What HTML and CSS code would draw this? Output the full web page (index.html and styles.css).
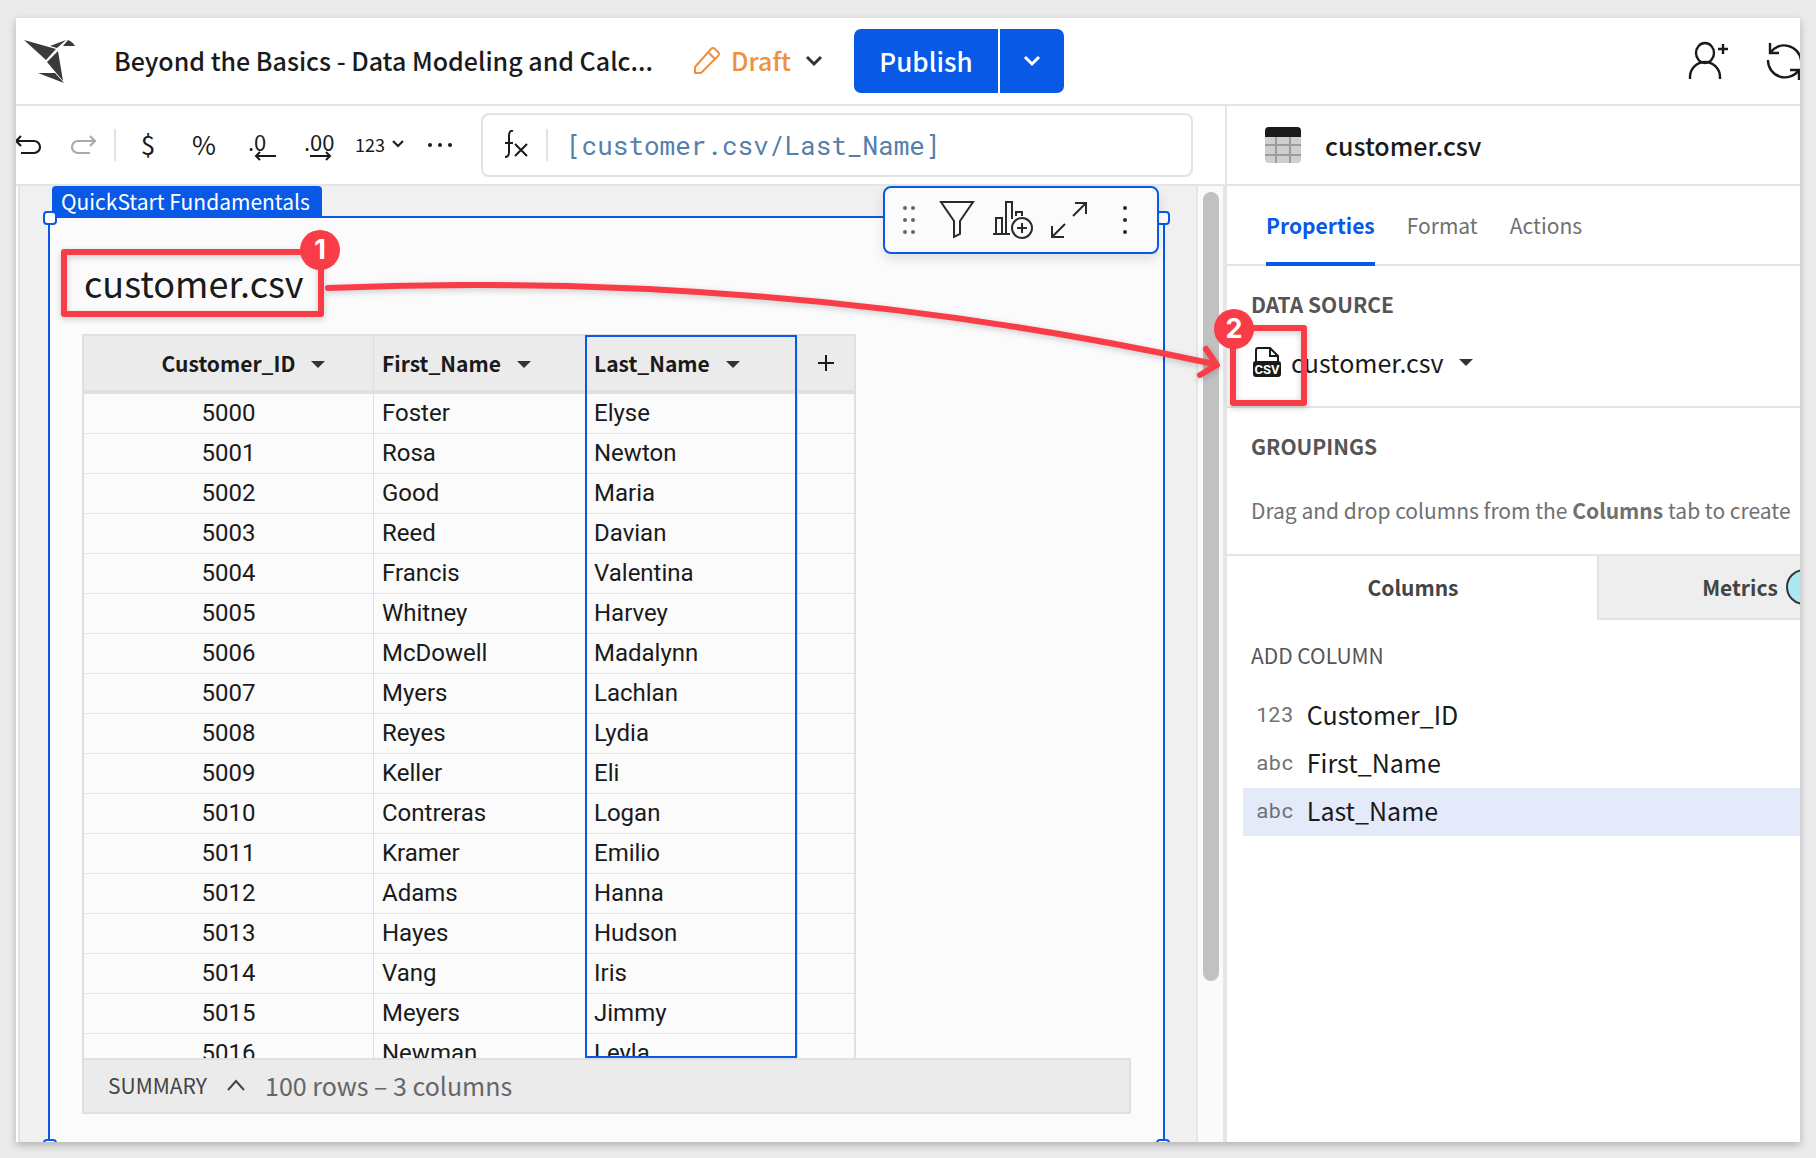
FILE: index.html
```html
<!DOCTYPE html>
<html lang="en">
<head>
<meta charset="utf-8">
<title>Beyond the Basics - Data Modeling and Calculations</title>
<link rel="stylesheet" href="styles.css">
</head>
<body>
<div class="app">
  <header class="topbar">
    <svg class="logo" width="52" height="46" viewBox="0 0 52 46" fill="#3a3a3a"><path d="M0 2 32 11 22 22z"/><path d="M26 8 42 2 33 10z"/><path d="M44 2q5 2 7 6H39z"/><path d="M34 13 23 24 39 43z"/><path d="M14 35H31L40 45z"/></svg>
    <h1 class="doc-title">Beyond the Basics - Data Modeling and Calc...</h1>
    <button class="draft" type="button">
      <svg width="28" height="30" viewBox="0 0 28 30" fill="none" stroke="#ef9040" stroke-width="2" stroke-linejoin="round"><path d="M2 21 18 3q2-2 4 0l3 3q2 2 0 4L8 27H2zM15 6l7 7"/></svg>
      <span>Draft</span>
      <svg width="18" height="12" viewBox="0 0 18 12" fill="none" stroke="#333" stroke-width="3"><path d="M2 2l7 7 7-7"/></svg>
    </button>
    <div class="publish">
      <button class="publish-main" type="button">Publish</button>
      <button class="publish-more" type="button" aria-label="Publish options"><svg width="18" height="12" viewBox="0 0 18 12" fill="none" stroke="#fff" stroke-width="3"><path d="M2 2l7 7 7-7"/></svg></button>
    </div>
    <div class="top-actions">
      <button type="button" aria-label="Share"><svg width="42" height="40" viewBox="0 0 42 40" fill="none" stroke="#1a1a1a" stroke-width="2.4"><ellipse cx="17" cy="12" rx="9" ry="10"/><path d="M2 38V36a15 15 0 0 1 30 0v2M35 3v10M30 8h10"/></svg></button>
      <button type="button" aria-label="Refresh"><svg width="40" height="38" viewBox="0 0 40 38" fill="none" stroke="#1a1a1a" stroke-width="2.4"><path d="M4 1v10h9M4 11A17 17 0 0 1 35 18M2 18A17 17 0 0 0 33 28M24 28h9v10"/></svg></button>
    </div>
  </header>

  <div class="workspace">
    <main class="main">
      <div class="toolbar">
        <button class="undo" type="button" aria-label="Undo"><svg width="26" height="20" viewBox="0 0 26 20" fill="none" stroke="#1a1a1a" stroke-width="2.2"><path d="M5 1 0 6l5 5M0 6h18a6 6 0 0 1 0 12H5"/></svg></button>
        <button class="redo" type="button" aria-label="Redo"><svg width="26" height="20" viewBox="0 0 26 20" fill="none" stroke="#aaa" stroke-width="2.2"><path d="M20 1l5 5-5 5M25 6H8a6 6 0 0 0 0 12h12"/></svg></button>
        <i class="rule"></i>
        <button class="tool currency" type="button">$</button>
        <button class="tool percent" type="button">%</button>
        <button class="tool decimals" type="button"><span>.0</span><svg width="22" height="10" viewBox="0 0 22 10" fill="none" stroke="#1a1a1a" stroke-width="2"><path d="M22 5H2M6 1 2 5l4 4"/></svg></button>
        <button class="tool decimals" type="button"><span>.00</span><svg width="22" height="10" viewBox="0 0 22 10" fill="none" stroke="#1a1a1a" stroke-width="2"><path d="M0 5h20M16 1l4 4-4 4"/></svg></button>
        <button class="tool number" type="button">123<svg width="14" height="9" viewBox="0 0 14 9" fill="none" stroke="#1a1a1a" stroke-width="2"><path d="M2 1l5 5 5-5"/></svg></button>
        <button class="tool" type="button" aria-label="More"><svg width="26" height="6" viewBox="0 0 26 6" fill="#1a1a1a"><circle cx="3" cy="3" r="2"/><circle cx="13" cy="3" r="2"/><circle cx="23" cy="3" r="2"/></svg></button>
        <label class="formula">
          <svg width="24" height="30" viewBox="0 0 24 30" fill="none" stroke="#1a1a1a" stroke-width="2"><path d="M9 1Q5 0 5 6v16q0 5-4 5M1 13h8M11 14l12 12M23 14 11 26"/></svg>
          <i class="rule"></i>
          <input type="text" value="[customer.csv/Last_Name]" aria-label="Formula">
        </label>
      </div>

      <div class="canvas">
        <section class="page">
          <span class="page-tag">QuickStart Fundamentals</span>
          <i class="handle tl"></i><i class="handle tr"></i><i class="handle bl"></i><i class="handle br"></i>
          <div class="element-tools">
            <svg class="grip" width="14" height="30" viewBox="0 0 14 30" fill="#666"><circle cx="3" cy="3" r="2"/><circle cx="11" cy="3" r="2"/><circle cx="3" cy="15" r="2"/><circle cx="11" cy="15" r="2"/><circle cx="3" cy="27" r="2"/><circle cx="11" cy="27" r="2"/></svg>
            <button type="button" aria-label="Filter"><svg width="36" height="38" viewBox="0 0 36 38" fill="none" stroke="#2a2a2a" stroke-width="2"><path d="M2 1h32L21 20v13l-6 3V20z"/></svg></button>
            <button type="button" aria-label="Create child element"><svg width="40" height="38" viewBox="0 0 40 38" fill="none" stroke="#2a2a2a" stroke-width="2"><path d="M0 33h17M3 33V17h6v16M13 33V1h6v17M23 15v-4h6v4"/><circle cx="29" cy="27" r="10"/><path d="M24 27h10M29 22v10"/></svg></button>
            <button type="button" aria-label="Maximize"><svg width="38" height="38" viewBox="0 0 38 38" fill="none" stroke="#2a2a2a" stroke-width="2"><path d="M24 2h11v11M35 2 22 15M1 25v11h12M1 36l13-13"/></svg></button>
            <button class="more" type="button" aria-label="More actions"><svg width="6" height="30" viewBox="0 0 6 30" fill="#2a2a2a"><circle cx="3" cy="3" r="2"/><circle cx="3" cy="15" r="2"/><circle cx="3" cy="27" r="2"/></svg></button>
          </div>
          <h2 class="element-title">customer.csv</h2>
          <div class="table-wrap">
            <table class="grid">
              <colgroup><col class="c-id"><col class="c-name"><col class="c-name"><col class="c-add"></colgroup>
              <thead><tr>
                <th class="center">Customer_ID<i class="caret"></i></th>
                <th>First_Name<i class="caret"></i></th>
                <th>Last_Name<i class="caret"></i></th>
                <th class="add"><button type="button" aria-label="Add column"><svg width="16" height="16" viewBox="0 0 16 16" stroke="#1a1a1a" stroke-width="2"><path d="M8 0v16M0 8h16"/></svg></button></th>
              </tr></thead>
              <tbody>
                <tr><td>5000</td><td>Foster</td><td>Elyse</td><td></td></tr>
                <tr><td>5001</td><td>Rosa</td><td>Newton</td><td></td></tr>
                <tr><td>5002</td><td>Good</td><td>Maria</td><td></td></tr>
                <tr><td>5003</td><td>Reed</td><td>Davian</td><td></td></tr>
                <tr><td>5004</td><td>Francis</td><td>Valentina</td><td></td></tr>
                <tr><td>5005</td><td>Whitney</td><td>Harvey</td><td></td></tr>
                <tr><td>5006</td><td>McDowell</td><td>Madalynn</td><td></td></tr>
                <tr><td>5007</td><td>Myers</td><td>Lachlan</td><td></td></tr>
                <tr><td>5008</td><td>Reyes</td><td>Lydia</td><td></td></tr>
                <tr><td>5009</td><td>Keller</td><td>Eli</td><td></td></tr>
                <tr><td>5010</td><td>Contreras</td><td>Logan</td><td></td></tr>
                <tr><td>5011</td><td>Kramer</td><td>Emilio</td><td></td></tr>
                <tr><td>5012</td><td>Adams</td><td>Hanna</td><td></td></tr>
                <tr><td>5013</td><td>Hayes</td><td>Hudson</td><td></td></tr>
                <tr><td>5014</td><td>Vang</td><td>Iris</td><td></td></tr>
                <tr><td>5015</td><td>Meyers</td><td>Jimmy</td><td></td></tr>
                <tr><td>5016</td><td>Newman</td><td>Leyla</td><td></td></tr>
              </tbody>
            </table>
            <i class="column-focus"></i>
          </div>
          <footer class="summary">
            <button type="button">SUMMARY<svg width="18" height="12" viewBox="0 0 18 12" fill="none" stroke="#444" stroke-width="2"><path d="M1 11l8-9 8 9"/></svg></button>
            <span>100 rows – 3 columns</span>
          </footer>
        </section>
        <div class="scroll-track"><i class="scroll-thumb"></i></div>
      </div>
    </main>

    <aside class="sidebar">
      <header class="side-head">
        <svg width="36" height="36" viewBox="0 0 36 36"><rect width="36" height="36" rx="4" fill="#cfcfcf"/><path d="M0 10V4a4 4 0 0 1 4-4h28a4 4 0 0 1 4 4v6z" fill="#1a1a1a"/><path d="M0 18h36M0 28h36M11 10v26M25 10v26" stroke="#9c9c9c" stroke-width="2"/></svg>
        <h2>customer.csv</h2>
      </header>
      <nav class="tabs">
        <a class="active" href="#properties">Properties</a>
        <a href="#format">Format</a>
        <a href="#actions">Actions</a>
      </nav>
      <section class="source">
        <h3>DATA SOURCE</h3>
        <button type="button" class="source-pick">
          <svg width="28" height="30" viewBox="0 0 28 30"><path d="M3 15V3q0-2 2-2h12l8 8v6M17 1v8h8" fill="none" stroke="#1a1a1a" stroke-width="2"/><rect y="14" width="28" height="16" rx="3" fill="#1a1a1a"/><text x="14" y="27" text-anchor="middle" class="csv">CSV</text></svg>
          <span>customer.csv</span><i class="caret"></i>
        </button>
      </section>
      <section class="groupings">
        <h3>GROUPINGS</h3>
        <p>Drag and drop columns from the <b>Columns</b> tab to create</p>
      </section>
      <nav class="split-tabs">
        <a class="active" href="#columns">Columns</a>
        <a href="#metrics">Metrics<i class="dot"></i></a>
      </nav>
      <section class="columns">
        <h4>ADD COLUMN</h4>
        <ul>
          <li><span class="type">123</span>Customer_ID</li>
          <li><span class="type">abc</span>First_Name</li>
          <li class="selected"><span class="type">abc</span>Last_Name</li>
        </ul>
      </section>
    </aside>
  </div>
</div>

<div class="callouts">
  <i class="frame frame-one"></i>
  <i class="frame frame-two"></i>
  <svg class="arrow" width="910" height="120" viewBox="320 270 910 120" fill="none" stroke="#f93d48" stroke-linecap="round" stroke-linejoin="round"><path d="M328 288C620 276 920 300 1214 364" stroke-width="6"/><path d="M1206 349l11 16-17 10" stroke-width="6"/></svg>
  <span class="badge badge-one">1</span>
  <span class="badge badge-two">2</span>
</div>
</body>
</html>
```
FILE: styles.css
```css
* { box-sizing: border-box; }
body {
  margin: 0;
  height: 100vh;
  padding: 18px 16px 16px;
  overflow: hidden;
  background: #ebebeb;
  color: #1a1a1a;
  font-family: "Noto Sans CJK SC", "Open Sans", sans-serif;
  font-size: 21px;
}
h1, h2, h3, h4, p, ul { margin: 0; padding: 0; font-weight: 400; }
button { border: 0; padding: 0; background: none; color: inherit; font: inherit; display: flex; align-items: center; }
a { color: inherit; text-decoration: none; }
i { display: block; flex: none; }
svg { display: block; flex: none; }

.app {
  height: 100%;
  display: flex;
  flex-direction: column;
  overflow: hidden;
  background: #fff;
  box-shadow: 0 -1px 0 #dedede, 0 3px 8px rgba(0, 0, 0, .25);
}
.topbar {
  flex: none;
  height: 88px;
  display: flex;
  align-items: center;
  border-bottom: 2px solid #e5e5e5;
  padding-left: 8px;
}
.logo { margin-right: 38px; }
.doc-title {
  width: 547px;
  padding-bottom: 2px;
  overflow: hidden;
  white-space: nowrap;
  text-overflow: ellipsis;
  font-size: 25px;
  font-weight: 500;
}
.draft { margin-left: 32px; gap: 10px; color: #ef9040; font-size: 25px; font-weight: 500; }
.draft span { margin-right: 4px; padding-bottom: 2px; }
.publish { margin-left: 31px; display: flex; gap: 2px; height: 64px; }
.publish button { justify-content: center; background: #0759e6; color: #fff; }
.publish .publish-main { width: 144px; padding-bottom: 2px; border-radius: 7px 0 0 7px; font-size: 26px; font-weight: 500; }
.publish .publish-more { width: 64px; border-radius: 0 7px 7px 0; }
.top-actions { margin: 0 -6px 0 auto; display: flex; gap: 36px; }

.workspace { flex: 1; min-height: 0; display: flex; }
.main { flex: 1; min-width: 0; display: flex; flex-direction: column; }
.toolbar {
  flex: none;
  height: 80px;
  display: flex;
  align-items: center;
  gap: 28px;
  padding-right: 32px;
  border-bottom: 2px solid #e5e5e5;
}
.redo { margin-right: -10px; }
.rule { width: 2px; height: 32px; background: #e3e3e3; }
.tool { justify-content: center; font-size: 24px; }
.tool.currency { width: 24px; margin-left: -8px; font-size: 26px; }
.tool.percent { width: 32px; font-size: 26px; }
.tool.currency, .tool.percent { padding-bottom: 4px; }
.tool.decimals { width: 28px; padding-top: 2px; flex-direction: column; align-items: flex-start; line-height: 20px; font-size: 22px; }
.decimals svg { align-self: flex-end; }
.tool.number { gap: 6px; margin: 0 -6px 0 -5px; padding-bottom: 2px; font-size: 18px; }
.formula {
  flex: 1;
  height: 64px;
  display: flex;
  align-items: center;
  gap: 18px;
  padding-left: 21px;
  border: 2px solid #e3e3e3;
  border-radius: 8px;
}
.formula input {
  flex: 1;
  min-width: 0;
  border: 0;
  outline: 0;
  padding: 0;
  background: none;
  color: #5580ac;
  font: 26px "Roboto Mono", "Liberation Mono", monospace;
}

.canvas { flex: 1; min-height: 0; display: flex; margin-left: 2px; border-left: 2px solid #e2e2e2; background: #f0f0f0; }
.page {
  position: relative;
  flex: 1;
  min-width: 0;
  display: flex;
  flex-direction: column;
  margin: 30px 31px 0 28px;
  padding: 32px 32px 28px;
  border: 2px solid #0759e6;
  border-bottom: 0;
  background: #fbfbfb;
}
.page-tag {
  position: absolute;
  left: 2px;
  top: -32px;
  height: 32px;
  padding: 0 12px 0 9px;
  border-radius: 4px 4px 0 0;
  background: #0759e6;
  color: #fff;
  line-height: 30px;
}
.handle { position: absolute; width: 14px; height: 14px; border: 2px solid #0759e6; border-radius: 4px; background: #fff; }
.tl { left: -7px; top: -7px; }
.tr { right: -7px; top: -7px; }
.bl { left: -7px; bottom: -11px; }
.br { right: -7px; bottom: -11px; }
.element-tools {
  position: absolute;
  top: -32px;
  right: 4px;
  width: 276px;
  height: 68px;
  display: flex;
  align-items: center;
  gap: 18px;
  padding-left: 17px;
  border: 2px solid #0759e6;
  border-radius: 8px;
  background: #fbfbfb;
  box-shadow: 0 6px 12px rgba(0, 0, 0, .1);
}
.grip { margin-right: 5px; }
.more { margin-left: 15px; }
.element-title { flex: none; margin-left: 2px; height: 84px; font-size: 36px; line-height: 65px; }
.table-wrap { position: relative; flex: 1; min-height: 0; overflow: hidden; }
.grid { width: 774px; table-layout: fixed; border-collapse: separate; border-spacing: 0; border: 2px solid #e0e0e0; font-family: Roboto, sans-serif; font-size: 24px; }
.c-id { width: 290px; }
.c-name { width: 212px; }
.grid th { height: 58px; padding: 0 8px; border-right: 1px solid #e0e0e0; border-bottom: 4px solid #e0e0e0; background: #ebebeb; text-align: left; font: 700 21px "Noto Sans CJK SC", sans-serif; }
.grid th.center, .grid td:first-child { text-align: center; }
.grid th.add { padding: 0 20px; }
.grid td { height: 40px; padding: 0 8px 2px; border-right: 1px solid #e0e0e0; border-bottom: 1px solid #e4e4e4; line-height: 36px; }
.grid th:last-child, .grid td:last-child { border-right: 0; }
.caret { display: inline-block; border: 7px solid transparent; border-top-color: #333; border-bottom: 0; margin-left: 16px; vertical-align: middle; }
.grid .caret { vertical-align: 4px; }
.center .caret { margin-right: -30px; }
.column-focus { position: absolute; left: 503px; top: 1px; bottom: 0; width: 212px; border: 2px solid #0759e6; }
.summary {
  flex: none;
  height: 56px;
  display: flex;
  align-items: center;
  gap: 20px;
  padding: 0 0 2px 24px;
  border: 2px solid #e0e0e0;
  background: #ebebeb;
  color: #666;
  font-size: 25px;
}
.summary button { gap: 20px; color: #444; font-size: 21px; }
.scroll-track { width: 29px; padding: 6px 5px 0; border-left: 2px solid #e6e6e6; border-right: 2px solid #e6e6e6; background: #fafafa; }
.scroll-thumb { width: 16px; height: 83%; border-radius: 8px; background: #c1c1c1; }

.sidebar { width: 575px; overflow: hidden; border-left: 2px solid #e5e5e5; white-space: nowrap; }
.side-head { height: 80px; display: flex; align-items: center; gap: 24px; padding-left: 38px; border-bottom: 2px solid #e5e5e5; }
.side-head h2 { font-size: 25px; font-weight: 500; }
.tabs { height: 80px; display: flex; gap: 32px; padding-left: 39px; border-bottom: 2px solid #e5e5e5; color: #707070; line-height: 78px; }
.tabs .active { height: 80px; border-bottom: 4px solid #0759e6; border-radius: 3px 3px 0 0; color: #0759e6; font-weight: 700; }
.sidebar h3 { color: #555; font-size: 21px; line-height: 32px; font-weight: 700; }
.source { height: 142px; padding: 22px 0 0 24px; border-bottom: 2px solid #e5e5e5; }
.source-pick { margin: 24px 0 0 2px; gap: 10px; font-size: 25px; line-height: 36px; }
.source-pick .caret { margin-left: 5px; }
.csv { fill: #fff; font: 700 13px Roboto, sans-serif; }
.groupings { height: 148px; padding: 22px 0 0 24px; border-bottom: 2px solid #e5e5e5; color: #707070; }
.groupings p { margin-top: 32px; line-height: 32px; }
.groupings b { font-weight: 700; }
.split-tabs { width: 698px; height: 64px; display: flex; color: #444; font-weight: 700; }
.split-tabs a { flex: 1; display: flex; align-items: center; justify-content: center; gap: 8px; border: 2px solid #e3e3e3; border-width: 0 0 2px 2px; background: #eee; }
.split-tabs .active { flex: 0 0 370px; background: #fff; border-color: transparent; }
.dot { width: 36px; height: 36px; border: 2px solid #333; border-radius: 50%; background: #aae8f2; }
.columns { padding: 19px 0 0 16px; }
.columns h4 { margin-bottom: 21px; padding-left: 8px; color: #555; font-size: 21px; line-height: 32px; }
.columns li { height: 48px; display: flex; align-items: center; gap: 13px; padding: 0 0 4px 13px; font-size: 25px; }
.columns .selected { background: #e4eafa; }
.type { color: #707070; font: 21px "Roboto Mono", "Liberation Mono", monospace; }

.callouts { position: absolute; inset: 0; pointer-events: none; }
.frame { position: absolute; border: 6px solid #f93d48; border-radius: 3px; filter: drop-shadow(0 2px 3px rgba(0, 0, 0, .2)); }
.frame-one { left: 61px; top: 249px; width: 263px; height: 68px; }
.frame-two { left: 1230px; top: 325px; width: 77px; height: 81px; }
.arrow { position: absolute; left: 320px; top: 270px; filter: drop-shadow(0 2px 3px rgba(0, 0, 0, .2)); }
.badge { position: absolute; width: 40px; height: 40px; border-radius: 50%; background: #f93d48; color: #fff; text-align: center; font: 700 27px/40px Inter, sans-serif; }
.badge-one { left: 300px; top: 230px; }
.badge-two { left: 1214px; top: 309px; }
```
